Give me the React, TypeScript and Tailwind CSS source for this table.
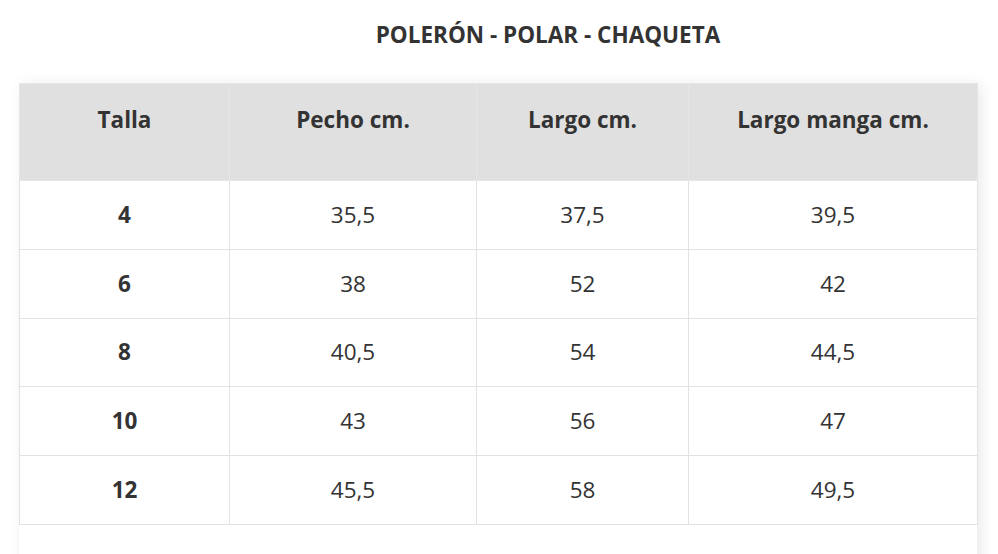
const headers = ["Talla", "Pecho cm.", "Largo cm.", "Largo manga cm."];

const rows = [
  ["4", "35,5", "37,5", "39,5"],
  ["6", "38", "52", "42"],
  ["8", "40,5", "54", "44,5"],
  ["10", "43", "56", "47"],
  ["12", "45,5", "58", "49,5"],
];

const widths = ["w-[210px]", "w-[247px]", "w-[212px]", "w-[289px]"];

export default function App() {
  return (
    <div
      className="min-h-[554px] bg-white text-[#333] overflow-hidden"
      style={{ fontFamily: "'Open Sans', 'Liberation Sans', sans-serif" }}
    >
      <h2 className="pt-[20px] pl-[98px] text-center text-[22.5px] font-bold leading-[30px]">
        POLERÓN - POLAR - CHAQUETA
      </h2>

      <div className="mt-[33px] ml-[19px] w-[958px] bg-white pb-[60px] shadow-[4px_2px_14px_rgba(0,0,0,0.09)]">
        <table className="w-full table-fixed border-collapse">
          <thead>
            <tr className="bg-[#e0e0e0]">
              {headers.map((h, i) => (
                <th
                  key={h}
                  className={`${widths[i]} h-[97px] border border-[#e6e6e6] pt-[20px] align-top text-[22.5px] font-bold leading-[32px]`}
                >
                  {h}
                </th>
              ))}
            </tr>
          </thead>
          <tbody>
            {rows.map((r) => (
              <tr key={r[0]}>
                {r.map((c, i) => (
                  <td
                    key={i}
                    className={`h-[68.8px] border-[1.5px] border-[#e2e2e2] text-center align-middle text-[22.5px] leading-[30px] ${
                      i === 0 ? "font-bold" : ""
                    }`}
                  >
                    {c}
                  </td>
                ))}
              </tr>
            ))}
          </tbody>
        </table>
      </div>
    </div>
  );
}
